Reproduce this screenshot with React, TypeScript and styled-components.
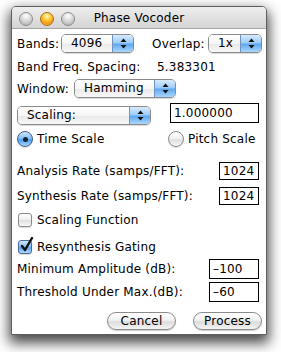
import React from "react";
import styled, { createGlobalStyle } from "styled-components";

const Global = createGlobalStyle`
  html, body { margin: 0; padding: 0; background: #ffffff; }
  body { font-family: "DejaVu Sans", "Liberation Sans", sans-serif; font-size: 12px; color: #000; }
`;

const Page = styled.div`
  width: 281px;
  height: 352px;
  box-sizing: border-box;
  padding: 6px 0 0 11px;
  overflow: hidden;
`;

const Window = styled.div`
  width: 256px;
  height: 329px;
  box-sizing: border-box;
  border: 1px solid #5e5e5e;
  border-radius: 5px 5px 0 0;
  background: #ffffff;
  box-shadow: 0 6px 13px 2px rgba(0, 0, 0, 0.72);
  display: flex;
  flex-direction: column;
  overflow: hidden;
`;

const TitleBar = styled.div`
  height: 22px;
  flex: none;
  box-sizing: border-box;
  padding: 3px 0 0 7px;
  background: linear-gradient(#eeeeee, #d4d4d4);
  border-bottom: 1px solid #a8a8a8;
  display: flex;
  align-items: center;
  position: relative;
`;

const Light = styled.div<{ $orange?: boolean }>`
  width: 14px;
  height: 14px;
  border-radius: 50%;
  box-sizing: border-box;
  margin-right: 7px;
  border: 1px solid ${(p) => (p.$orange ? "#b06a10" : "#8d8d8d")};
  background: ${(p) =>
    p.$orange
      ? "radial-gradient(circle at 50% 25%, #fff8c8 0, #ffcf40 35%, #f29a18 70%, #ffd35a 100%)"
      : "radial-gradient(circle at 50% 25%, #ffffff 0, #dadada 45%, #b9b9b9 80%, #e4e4e4 100%)"};
`;

const Title = styled.div`
  position: absolute;
  left: 0;
  right: 0;
  top: 4px;
  text-align: center;
  font-size: 12px;
  letter-spacing: 0.2px;
  pointer-events: none;
`;

const Content = styled.div`
  display: flex;
  flex-direction: column;
  padding: 0 4px 0 5px;
`;

const Row = styled.div<{ $mt: number; $h: number; $end?: boolean; $top?: boolean }>`
  display: flex;
  align-items: ${(p) => (p.$top ? "flex-start" : "center")};
  justify-content: ${(p) => (p.$end ? "flex-end" : "flex-start")};
  margin-top: ${(p) => p.$mt}px;
  height: ${(p) => p.$h}px;
  white-space: nowrap;
`;

const Label = styled.div<{ $w?: number; $ml?: number }>`
  flex: ${(p) => (p.$w ? "none" : "1")};
  width: ${(p) => (p.$w ? `${p.$w}px` : "auto")};
  margin-left: ${(p) => p.$ml ?? 0}px;
  letter-spacing: 0.2px;
`;

const Popup = styled.div<{ $w: number; $mt?: number }>`
  width: ${(p) => p.$w}px;
  height: 19px;
  margin-top: ${(p) => p.$mt ?? 0}px;
  flex: none;
  box-sizing: border-box;
  border: 1px solid #8a8a8a;
  border-radius: 5px;
  display: flex;
  overflow: hidden;
  box-shadow: 0 1px 1px rgba(0, 0, 0, 0.15);
`;

const PopupText = styled.div`
  flex: 1;
  padding-left: 9px;
  line-height: 17px;
  letter-spacing: 0.2px;
  background: linear-gradient(#ffffff 0%, #f6f6f6 50%, #e9e9e9 52%, #f8f8f8 100%);
`;

const PopupArrow = styled.div`
  width: 20px;
  flex: none;
  border-left: 1px solid #6f93c2;
  background: linear-gradient(#d7ebfd 0%, #9ccbf7 48%, #5ea6f0 52%, #a9d6fc 100%);
  display: flex;
  align-items: center;
  justify-content: center;
`;

const Field = styled.div<{ $w: number; $h: number; $mr?: number }>`
  width: ${(p) => p.$w}px;
  height: ${(p) => p.$h}px;
  flex: none;
  margin-right: ${(p) => p.$mr ?? 3}px;
  box-sizing: border-box;
  border: 1px solid #000;
  background: #fff;
  padding-left: 3px;
  display: flex;
  align-items: center;
  letter-spacing: 0.2px;
`;

const Option = styled.div<{ $w?: number }>`
  display: flex;
  align-items: center;
  width: ${(p) => (p.$w ? `${p.$w}px` : "auto")};
  flex: none;
  letter-spacing: 0.2px;
`;

const Radio = styled.div<{ $on?: boolean }>`
  width: 16px;
  height: 16px;
  border-radius: 50%;
  box-sizing: border-box;
  margin-right: 4px;
  border: 1px solid ${(p) => (p.$on ? "#3f5f8f" : "#8a8a8a")};
  background: ${(p) =>
    p.$on
      ? "linear-gradient(#cfe6fd 0%, #7fb9f3 50%, #4f9cee 55%, #a9d6fc 100%)"
      : "linear-gradient(#ffffff 0%, #efefef 50%, #dedede 55%, #f8f8f8 100%)"};
  display: flex;
  align-items: center;
  justify-content: center;
  box-shadow: 0 1px 1px rgba(0, 0, 0, 0.15);
`;

const Dot = styled.div`
  width: 5px;
  height: 5px;
  border-radius: 50%;
  background: #1a2330;
`;

const Check = styled.div<{ $on?: boolean }>`
  width: 14px;
  height: 14px;
  border-radius: 3px;
  box-sizing: border-box;
  margin: 0 5px 0 1px;
  position: relative;
  border: 1px solid ${(p) => (p.$on ? "#4a6a98" : "#8a8a8a")};
  background: ${(p) =>
    p.$on
      ? "linear-gradient(#cfe6fd 0%, #86bdf4 50%, #5aa2ef 55%, #b0dafd 100%)"
      : "linear-gradient(#ffffff 0%, #efefef 50%, #e0e0e0 55%, #f8f8f8 100%)"};
  box-shadow: 0 1px 1px rgba(0, 0, 0, 0.15);
`;

const CheckMark = styled.svg`
  position: absolute;
  left: 1px;
  top: -4px;
`;

const Button = styled.div`
  width: 69px;
  height: 18px;
  box-sizing: border-box;
  border: 1px solid #8c8c8c;
  border-radius: 9px;
  background: linear-gradient(#ffffff 0%, #f1f1f1 45%, #dcdcdc 55%, #f4f4f4 100%);
  display: flex;
  align-items: center;
  justify-content: center;
  letter-spacing: 0.2px;
  box-shadow: 0 1px 1px rgba(0, 0, 0, 0.2);
  & + & {
    margin-left: 17px;
  }
`;

const Arrows = () => (
  <svg width="7" height="11" viewBox="0 0 7 11">
    <path d="M3.5 0.5 L6.5 4 L0.5 4 Z" fill="#111" />
    <path d="M0.5 7 L6.5 7 L3.5 10.5 Z" fill="#111" />
  </svg>
);

const PopupButton = ({ w, text, mt }: { w: number; text: string; mt?: number }) => (
  <Popup $w={w} $mt={mt}>
    <PopupText>{text}</PopupText>
    <PopupArrow>
      <Arrows />
    </PopupArrow>
  </Popup>
);

export default function App() {
  return (
    <>
      <Global />
      <Page>
        <Window>
          <TitleBar>
            <Light />
            <Light $orange />
            <Light />
            <Title>Phase Vocoder</Title>
          </TitleBar>
          <Content>
            <Row $mt={5} $h={19}>
              <Label $w={44}>Bands:</Label>
              <PopupButton w={73} text="4096" />
              <Label $w={56} $ml={18}>Overlap:</Label>
              <PopupButton w={54} text="1x" />
            </Row>
            <Row $mt={6} $h={16}>
              <Label $w={140}>Band Freq. Spacing:</Label>
              <Label>5.383301</Label>
            </Row>
            <Row $mt={4} $h={19}>
              <Label $w={57}>Window:</Label>
              <PopupButton w={102} text="Hamming" />
            </Row>
            <Row $mt={5} $h={23} $top>
              <PopupButton w={134} text="Scaling:" mt={3} />
              <Label />
              <Field $w={89} $h={20}>1.000000</Field>
            </Row>
            <Row $mt={5} $h={16}>
              <Option $w={151}>
                <Radio $on>
                  <Dot />
                </Radio>
                Time Scale
              </Option>
              <Option>
                <Radio />
                Pitch Scale
              </Option>
            </Row>
            <Row $mt={15} $h={18}>
              <Label>Analysis Rate (samps/FFT):</Label>
              <Field $w={40} $h={18}>1024</Field>
            </Row>
            <Row $mt={7} $h={18}>
              <Label>Synthesis Rate (samps/FFT):</Label>
              <Field $w={40} $h={18}>1024</Field>
            </Row>
            <Row $mt={7} $h={16}>
              <Option>
                <Check />
                Scaling Function
              </Option>
            </Row>
            <Row $mt={11} $h={16}>
              <Option>
                <Check $on>
                  <CheckMark width="14" height="16" viewBox="0 0 14 16">
                    <path
                      d="M2 9 L5 13 L12 1"
                      fill="none"
                      stroke="#111"
                      strokeWidth="2.4"
                      strokeLinecap="round"
                      strokeLinejoin="round"
                    />
                  </CheckMark>
                </Check>
                Resynthesis Gating
              </Option>
            </Row>
            <Row $mt={4} $h={20}>
              <Label>Minimum Amplitude (dB):</Label>
              <Field $w={50} $h={20}>–100</Field>
            </Row>
            <Row $mt={3} $h={20}>
              <Label>Threshold Under Max.(dB):</Label>
              <Field $w={50} $h={20}>–60</Field>
            </Row>
            <Row $mt={10} $h={18} $end>
              <Button>Cancel</Button>
              <Button>Process</Button>
            </Row>
          </Content>
        </Window>
      </Page>
    </>
  );
}
